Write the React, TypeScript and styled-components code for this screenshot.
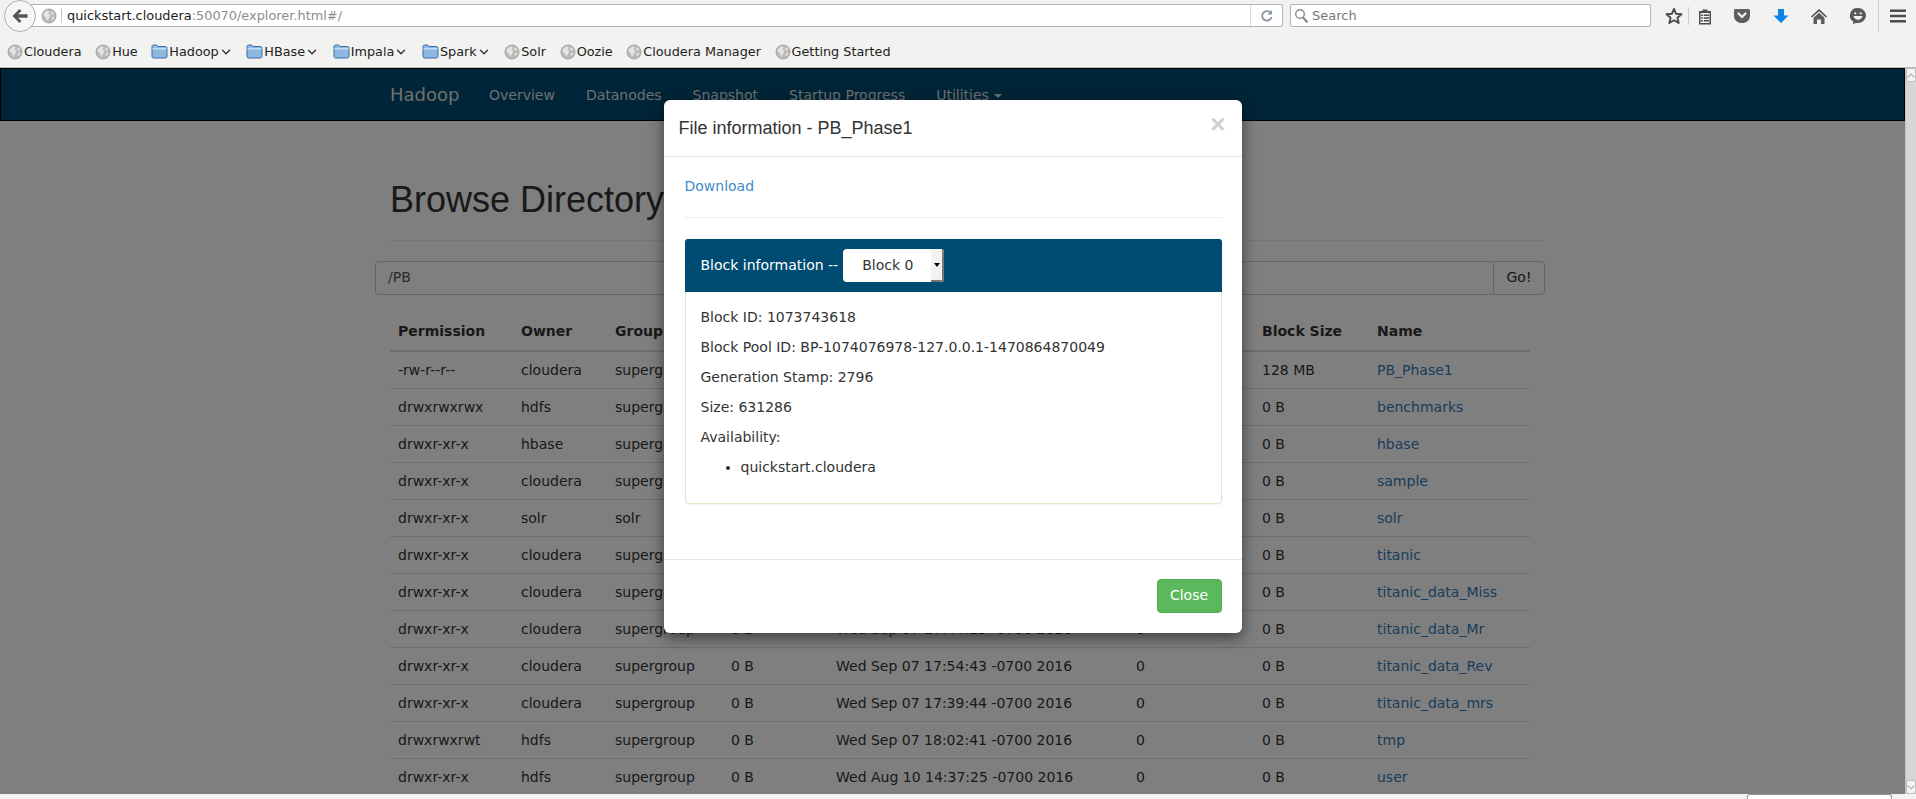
import React from "react";
import styled, { createGlobalStyle } from "styled-components";
import { ChevronDown } from "lucide-react";

const Global = createGlobalStyle`
  html, body { margin: 0; padding: 0; height: 100%; overflow: hidden; background: #f2f2f0; }
  * { box-sizing: border-box; }
`;

const Shell = styled.div`
  width: 1916px;
  height: 799px;
  display: flex;
  flex-direction: column;
  overflow: hidden;
  font-family: "DejaVu Sans", sans-serif;
  background: #f2f2f0;
`;

/* ---------- browser chrome ---------- */
const Toolbar = styled.div`
  height: 36px;
  display: flex;
  align-items: flex-start;
  padding: 4px 0 0 30px;
  position: relative;
`;
const BackButton = styled.div`
  position: absolute;
  left: 4px;
  top: 0;
  width: 32px;
  height: 32px;
  border-radius: 50%;
  border: 1px solid #b0b0b0;
  background: #f6f6f5;
  display: flex;
  align-items: center;
  justify-content: center;
  z-index: 1;
`;
const UrlBar = styled.div`
  flex: none;
  width: 1253px;
  height: 23px;
  border: 1px solid #b4b4b4;
  border-radius: 0 2px 2px 0;
  background: #fff;
  display: flex;
  align-items: center;
  padding-left: 10px;
  font-size: 12.9px;
`;
const UrlSep = styled.span`
  width: 1px;
  height: 15px;
  background: #c8c8c8;
  margin: 0 5px 0 4px;
`;
const Host = styled.span`
  color: #1c1c1c;
`;
const UrlRest = styled.span`
  color: #8c8c8c;
  flex: 1;
`;
const Reload = styled.div`
  width: 32px;
  height: 21px;
  border-left: 1px solid #dcdcdc;
  display: flex;
  align-items: center;
  justify-content: center;
`;
const SearchBox = styled.div`
  flex: none;
  width: 361px;
  height: 23px;
  margin-left: 7px;
  border: 1px solid #b4b4b4;
  border-radius: 2px;
  background: #fff;
  display: flex;
  align-items: center;
  gap: 3px;
  padding-left: 3px;
  font-size: 13px;
  color: #777;
`;
const ToolIcons = styled.div`
  flex: none;
  display: flex;
  align-items: center;
  height: 24px;
  margin-left: 8px;
`;
const ToolIcon = styled.span<{ $w: number }>`
  flex: none;
  width: ${(p) => p.$w}px;
  display: flex;
  justify-content: center;
  align-items: center;
`;
const ToolSep = styled.span<{ $h: number }>`
  flex: none;
  width: 1px;
  height: ${(p) => p.$h}px;
  background: #cfcfcd;
`;

const Bookmarks = styled.div`
  height: 32px;
  display: flex;
  align-items: center;
  gap: 13.6px;
  padding: 0 0 0 7px;
  font-size: 12.8px;
  color: #222;
  border-bottom: 1px solid #bdbdbb;
`;
const Bookmark = styled.div`
  display: flex;
  align-items: center;
  white-space: nowrap;
`;
const BookmarkLabel = styled.span`
  margin-left: 1px;
`;

/* ---------- page ---------- */
const Viewport = styled.div`
  height: 726px;
  display: flex;
  position: relative;
  overflow: hidden;
`;
const Page = styled.div`
  width: 1905px;
  height: 100%;
  background: #fff;
  overflow: hidden;
  font-size: 14px;
  color: #333;
`;
const Navbar = styled.div`
  height: 53px;
  background: #004b71;
  border: 1px solid #000;
  display: flex;
  align-items: center;
  padding-left: 389px;
  color: #dedede;
  font-size: 14px;
`;
const Brand = styled.span`
  font-size: 18px;
  width: 99px;
`;
const NavLink = styled.span`
  margin-right: 31px;
  &:last-child {
    margin-right: 0;
  }
`;
const Caret = styled.span`
  display: inline-block;
  margin-left: 5px;
  vertical-align: middle;
  border-top: 4px solid #dedede;
  border-left: 4px solid transparent;
  border-right: 4px solid transparent;
`;
const Container = styled.div`
  width: 1170px;
  margin-left: 375px;
`;
const Header = styled.div`
  margin: 0 0 20px 15px;
  padding-top: 59px;
  height: 120px;
  border-bottom: 1px solid #eee;
`;
const Title = styled.h1`
  margin: 0;
  font: 500 36px/40px "Liberation Sans", sans-serif;
  color: #333;
`;
const InputGroup = styled.div`
  height: 34px;
  display: flex;
  margin-bottom: 17px;
`;
const PathInput = styled.div`
  flex: 1;
  border: 1px solid #ccc;
  border-right: 0;
  border-radius: 4px 0 0 4px;
  padding: 0 12px;
  line-height: 31px;
  font-size: 14px;
  color: #555;
`;
const GoButton = styled.div`
  width: 52px;
  border: 1px solid #ccc;
  border-radius: 0 4px 4px 0;
  text-align: center;
  line-height: 31px;
  font-size: 14px;
`;
const Table = styled.table`
  width: 1140px;
  margin-left: 15px;
  table-layout: fixed;
  border-collapse: collapse;
  font-size: 14px;
`;
const Th = styled.th<{ $w: number }>`
  width: ${(p) => p.$w}px;
  height: 39px;
  padding: 0 8px 1px;
  text-align: left;
  font-weight: 700;
  border-bottom: 2px solid #ddd;
  white-space: nowrap;
`;
const Td = styled.td`
  height: 37px;
  padding: 0 8px;
  border-bottom: 1px solid #ddd;
  white-space: nowrap;
`;
const NameLink = styled.span`
  color: #337ab7;
`;

const Scrollbar = styled.div`
  width: 11px;
  background: #d6d6d5;
  display: flex;
  flex-direction: column;
  justify-content: space-between;
  border-left: 1px solid #c4c4c4;
`;
const ScrollArrow = styled.div`
  height: 14px;
  background: #f4f4f3;
  border: 1px solid #bdbdbd;
  border-radius: 2px;
  display: flex;
  align-items: center;
  justify-content: center;
`;

const FindStrip = styled.div`
  height: 5px;
  padding-left: 1747px;
`;
const FindBox = styled.div`
  width: 145px;
  height: 6px;
  background: #fff;
  border: 1px solid #999;
  border-bottom: 0;
  border-radius: 3px 3px 0 0;
`;

/* ---------- modal ---------- */
const Backdrop = styled.div`
  position: absolute;
  left: 0;
  top: 0;
  width: 1905px;
  height: 100%;
  background: rgba(0, 0, 0, 0.5);
  display: flex;
  justify-content: center;
  align-items: flex-start;
  padding-top: 32px;
`;
const Modal = styled.div`
  width: 578px;
  height: 533px;
  background: #fff;
  border-radius: 6px;
  box-shadow: 0 5px 15px rgba(0, 0, 0, 0.5);
  display: flex;
  flex-direction: column;
  color: #333;
`;
const ModalHeader = styled.div`
  height: 57px;
  border-bottom: 1px solid #e5e5e5;
  display: flex;
  align-items: center;
  justify-content: space-between;
  padding: 0 16px 0 15px;
`;
const ModalTitle = styled.h4`
  margin: 0;
  font: 500 18px/20px "Liberation Sans", sans-serif;
`;
const CloseX = styled.span`
  font: 700 26px/1 "Liberation Sans", sans-serif;
  color: #cfcfcf;
  margin-bottom: 9px;
`;
const ModalBody = styled.div`
  flex: 1;
  padding: 19px 20px 0 21px;
`;
const DownloadLink = styled.a`
  display: block;
  color: #428bca;
  font-size: 14px;
  line-height: 20px;
`;
const Rule = styled.div`
  height: 1px;
  background: #eee;
  margin: 21px 0 21px;
`;
const Panel = styled.div`
  width: 537px;
  height: 265px;
  border: 1px solid #d6e9c6;
  border-radius: 4px;
  box-shadow: 0 1px 1px rgba(0, 0, 0, 0.05);
`;
const PanelHeading = styled.div`
  height: 53px;
  margin: -1px -1px 0;
  background: #004b71;
  border-radius: 3px 3px 0 0;
  display: flex;
  align-items: center;
  padding-left: 16px;
  color: #fff;
  font-size: 14px;
`;
const PanelLabel = styled.span`
  margin-bottom: 2px;
`;
const BlockSelect = styled.div`
  width: 101px;
  height: 33px;
  margin-left: 5px;
  background: #fff;
  border-radius: 4px;
  display: flex;
  color: #333;
  font-size: 14px;
  line-height: 33px;
  overflow: hidden;
`;
const SelectValue = styled.span`
  flex: 1;
  padding-left: 19px;
`;
const SelectArrow = styled.span`
  width: 13px;
  background: #f2f2f0;
  border-right: 2px solid #777;
  border-bottom: 2px solid #777;
  display: flex;
  align-items: center;
  justify-content: center;
  &::before {
    content: "";
    border-top: 4px solid #000;
    border-left: 3px solid transparent;
    border-right: 3px solid transparent;
  }
`;
const PanelBody = styled.div`
  padding: 10px 15px;
  font-size: 14px;
  line-height: 30px;
`;
const Node = styled.ul`
  margin: 0;
  padding-left: 40px;
`;
const ModalFooter = styled.div`
  height: 74px;
  border-top: 1px solid #e5e5e5;
  display: flex;
  justify-content: flex-end;
  align-items: flex-start;
  padding: 19px 20px 0 0;
`;
const CloseButton = styled.div`
  width: 65px;
  height: 34px;
  background: #5cb85c;
  border: 1px solid #4cae4c;
  border-radius: 4px;
  color: #fff;
  font-size: 14px;
  line-height: 31px;
  text-align: center;
`;

/* ---------- icons ---------- */
const Globe = () => (
  <svg width="16" height="16" viewBox="0 0 16 16">
    <circle cx="8" cy="8" r="7" fill="#b9b9b9" stroke="#a4a4a4" />
    <path d="M3 5 6 2.500l2.500.5-1 2.500L9.500 7 8 10 6 13 4.800 9.500 2.500 7.500Z M10.500 3l2.500 2-1 2-2-1.500Z M11 9l2.500-.5-1.500 3.500-1.500-.5Z" fill="#e4e4e4" />
  </svg>
);
const Folder = () => (
  <svg width="17" height="17" viewBox="0 0 17 17">
    <path d="M1 3.500C1 2.600 1.600 2 2.500 2h3.200l1.300 1.500h7.500c.9 0 1.500.6 1.500 1.500v8.500c0 .9-.6 1.500-1.500 1.500h-12C1.600 15 1 14.400 1 13.500Z" fill="#8db8e0" stroke="#3a6ea5" />
    <path d="M1.500 5h14v1.500h-14Z" fill="#c4dcf2" />
  </svg>
);
const BackArrow = () => (
  <svg width="18" height="16" viewBox="0 0 18 16">
    <path d="M8.500 1 1.500 8l7 7 2-2-3.500-3.200h9.500V6.200H7L10.500 3Z" fill="#555" />
  </svg>
);
const ReloadIcon = () => (
  <svg width="14" height="14" viewBox="0 0 14 14" fill="none">
    <path d="M11.500 8a4.700 4.700 0 1 1-1.300-4.500" stroke="#8795a5" strokeWidth="1.800" />
    <path d="M12 1v4.500H7.500Z" fill="#8795a5" />
  </svg>
);
const SearchIcon = () => (
  <svg width="15" height="16" viewBox="0 0 15 16" fill="none">
    <circle cx="6" cy="6" r="4.300" stroke="#8a8a8a" strokeWidth="1.400" />
    <path d="M9 9.500 13.500 14.500" stroke="#8a8a8a" strokeWidth="2.200" />
  </svg>
);
const Star = () => (
  <svg width="18" height="18" viewBox="0 0 18 18">
    <path d="M9 1.800 11.100 6.800 16.500 7.200 12.400 10.700 13.700 16 9 13.200 4.300 16 5.600 10.700 1.500 7.200 6.900 6.800Z" fill="none" stroke="#4c4c4c" strokeWidth="1.900" strokeLinejoin="round" />
  </svg>
);
const Clipboard = () => (
  <svg width="16" height="17" viewBox="0 0 16 17">
    <path d="M5.500 1.500h5V3H14v13.500H2V3h3.500Z" fill="#4c4c4c" />
    <path d="M3.500 5h9v10h-9Z" fill="#f2f2f0" />
    <path d="M4 6.500h1.800v1.400H4ZM6.800 6.500H12v1.400H6.800ZM4 9.300h1.800v1.400H4ZM6.800 9.300H12v1.400H6.800ZM4 12.100h1.800v1.400H4ZM6.800 12.100H12v1.400H6.800Z" fill="#4c4c4c" />
  </svg>
);
const Pocket = () => (
  <svg width="18" height="16" viewBox="0 0 18 16">
    <path d="M2.500 1h13c.8 0 1.500.7 1.500 1.500V8c0 4.300-3.600 7-8 7S1 12.300 1 8V2.500C1 1.700 1.700 1 2.500 1Z" fill="#5e5e5e" />
    <path d="M5.500 5.500 9 9l3.500-3.500" fill="none" stroke="#f2f2f0" strokeWidth="2.200" strokeLinecap="round" />
  </svg>
);
const Download = () => (
  <svg width="16" height="16" viewBox="0 0 16 16">
    <path d="M5 1h6v6.500h4.500L8 15 .5 7.500H5Z" fill="#0a84e8" />
  </svg>
);
const Home = () => (
  <svg width="18" height="17" viewBox="0 0 18 17">
    <path d="M9 1 1 8.500l1 1L9 3.300l7 6.200 1-1Z" fill="#4c4c4c" />
    <path d="M9 4.800 3.500 9.700V16H7v-4.500h4V16h3.500V9.700Z" fill="#5e5e5e" />
  </svg>
);
const Chat = () => (
  <svg width="18" height="18" viewBox="0 0 18 18">
    <path d="M9 1a8 7.500 0 0 1 0 15H6.500L4 17.500 4.300 14.700A7.500 7.500 0 0 1 9 1Z" fill="#5a5a5a" />
    <circle cx="6.300" cy="6.300" r="1.100" fill="#f2f2f0" />
    <circle cx="11.700" cy="6.300" r="1.100" fill="#f2f2f0" />
    <path d="M4.500 9h9c-.5 2.400-2.300 3.700-4.500 3.700S5 11.400 4.500 9Z" fill="#f2f2f0" />
  </svg>
);
const Burger = () => (
  <svg width="16" height="14" viewBox="0 0 16 14">
    <path d="M0 .5h16v2.600H0ZM0 5.700h16v2.600H0ZM0 10.900h16v2.600H0Z" fill="#4c4c4c" />
  </svg>
);
const ScrollChevron = ({ up }: { up?: boolean }) => (
  <svg width="8" height="5" viewBox="0 0 8 5" fill="none">
    <path d={up ? "M.5 4.500 4 1l3.500 3.500" : "M.5.500 4 4 7.500.500"} stroke="#b5b5b5" strokeWidth="1.200" />
  </svg>
);

/* ---------- data ---------- */
const bookmarks: { label: string; folder?: boolean }[] = [
  { label: "Cloudera" },
  { label: "Hue" },
  { label: "Hadoop", folder: true },
  { label: "HBase", folder: true },
  { label: "Impala", folder: true },
  { label: "Spark", folder: true },
  { label: "Solr" },
  { label: "Oozie" },
  { label: "Cloudera Manager" },
  { label: "Getting Started" },
];

const rows = [
  ["-rw-r--r--", "cloudera", "supergroup", "631.29 KB", "Wed Sep 07 18:10:22 -0700 2016", "1", "128 MB", "PB_Phase1"],
  ["drwxrwxrwx", "hdfs", "supergroup", "0 B", "Thu Aug 11 14:35:52 -0700 2016", "0", "0 B", "benchmarks"],
  ["drwxr-xr-x", "hbase", "supergroup", "0 B", "Thu Aug 11 14:36:27 -0700 2016", "0", "0 B", "hbase"],
  ["drwxr-xr-x", "cloudera", "supergroup", "0 B", "Tue Aug 30 11:02:18 -0700 2016", "0", "0 B", "sample"],
  ["drwxr-xr-x", "solr", "solr", "0 B", "Wed Aug 10 14:37:25 -0700 2016", "0", "0 B", "solr"],
  ["drwxr-xr-x", "cloudera", "supergroup", "0 B", "Wed Sep 07 17:12:09 -0700 2016", "0", "0 B", "titanic"],
  ["drwxr-xr-x", "cloudera", "supergroup", "0 B", "Wed Sep 07 17:30:51 -0700 2016", "0", "0 B", "titanic_data_Miss"],
  ["drwxr-xr-x", "cloudera", "supergroup", "0 B", "Wed Sep 07 17:44:13 -0700 2016", "0", "0 B", "titanic_data_Mr"],
  ["drwxr-xr-x", "cloudera", "supergroup", "0 B", "Wed Sep 07 17:54:43 -0700 2016", "0", "0 B", "titanic_data_Rev"],
  ["drwxr-xr-x", "cloudera", "supergroup", "0 B", "Wed Sep 07 17:39:44 -0700 2016", "0", "0 B", "titanic_data_mrs"],
  ["drwxrwxrwt", "hdfs", "supergroup", "0 B", "Wed Sep 07 18:02:41 -0700 2016", "0", "0 B", "tmp"],
  ["drwxr-xr-x", "hdfs", "supergroup", "0 B", "Wed Aug 10 14:37:25 -0700 2016", "0", "0 B", "user"],
];

const columns: [string, number][] = [
  ["Permission", 123],
  ["Owner", 94],
  ["Group", 116],
  ["Size", 105],
  ["Last Modified", 300],
  ["Replication", 126],
  ["Block Size", 115],
  ["Name", 161],
];

export default function App() {
  return (
    <Shell>
      <Global />
      <Toolbar>
        <BackButton>
          <BackArrow />
        </BackButton>
        <UrlBar>
          <Globe />
          <UrlSep />
          <Host>quickstart.cloudera</Host>
          <UrlRest>:50070/explorer.html#/</UrlRest>
          <Reload>
            <ReloadIcon />
          </Reload>
        </UrlBar>
        <SearchBox>
          <SearchIcon />
          Search
        </SearchBox>
        <ToolIcons>
          <ToolIcon $w={29}>
            <Star />
          </ToolIcon>
          <ToolSep $h={18} />
          <ToolIcon $w={32}>
            <Clipboard />
          </ToolIcon>
          <ToolIcon $w={42}>
            <Pocket />
          </ToolIcon>
          <ToolIcon $w={36}>
            <Download />
          </ToolIcon>
          <ToolIcon $w={40}>
            <Home />
          </ToolIcon>
          <ToolIcon $w={37}>
            <Chat />
          </ToolIcon>
          <ToolIcon $w={2} />
          <ToolSep $h={32} />
          <ToolIcon $w={38}>
            <Burger />
          </ToolIcon>
        </ToolIcons>
      </Toolbar>
      <Bookmarks>
        {bookmarks.map((b) => (
          <Bookmark key={b.label}>
            {b.folder ? <Folder /> : <Globe />}
            <BookmarkLabel>{b.label}</BookmarkLabel>
            {b.folder && <ChevronDown size={14} strokeWidth={2.4} color="#333" />}
          </Bookmark>
        ))}
      </Bookmarks>
      <Viewport>
        <Page>
          <Navbar>
            <Brand>Hadoop</Brand>
            <NavLink>Overview</NavLink>
            <NavLink>Datanodes</NavLink>
            <NavLink>Snapshot</NavLink>
            <NavLink>Startup Progress</NavLink>
            <NavLink>
              Utilities
              <Caret />
            </NavLink>
          </Navbar>
          <Container>
            <Header>
              <Title>Browse Directory</Title>
            </Header>
            <InputGroup>
              <PathInput>/PB</PathInput>
              <GoButton>Go!</GoButton>
            </InputGroup>
            <Table>
              <thead>
                <tr>
                  {columns.map(([name, w]) => (
                    <Th key={name} $w={w}>
                      {name}
                    </Th>
                  ))}
                </tr>
              </thead>
              <tbody>
                {rows.map((r) => (
                  <tr key={r[7]}>
                    {r.map((c, i) => (
                      <Td key={i}>{i === 7 ? <NameLink>{c}</NameLink> : c}</Td>
                    ))}
                  </tr>
                ))}
              </tbody>
            </Table>
          </Container>
        </Page>
        <Scrollbar>
          <ScrollArrow>
            <ScrollChevron up />
          </ScrollArrow>
          <ScrollArrow>
            <ScrollChevron />
          </ScrollArrow>
        </Scrollbar>
        <Backdrop>
          <Modal>
            <ModalHeader>
              <ModalTitle>File information - PB_Phase1</ModalTitle>
              <CloseX>×</CloseX>
            </ModalHeader>
            <ModalBody>
              <DownloadLink>Download</DownloadLink>
              <Rule />
              <Panel>
                <PanelHeading>
                  <PanelLabel>Block information --</PanelLabel>
                  <BlockSelect>
                    <SelectValue>Block 0</SelectValue>
                    <SelectArrow />
                  </BlockSelect>
                </PanelHeading>
                <PanelBody>
                  <div>Block ID: 1073743618</div>
                  <div>Block Pool ID: BP-1074076978-127.0.0.1-1470864870049</div>
                  <div>Generation Stamp: 2796</div>
                  <div>Size: 631286</div>
                  <div>Availability:</div>
                  <Node>
                    <li>quickstart.cloudera</li>
                  </Node>
                </PanelBody>
              </Panel>
            </ModalBody>
            <ModalFooter>
              <CloseButton>Close</CloseButton>
            </ModalFooter>
          </Modal>
        </Backdrop>
      </Viewport>
      <FindStrip>
        <FindBox />
      </FindStrip>
    </Shell>
  );
}
